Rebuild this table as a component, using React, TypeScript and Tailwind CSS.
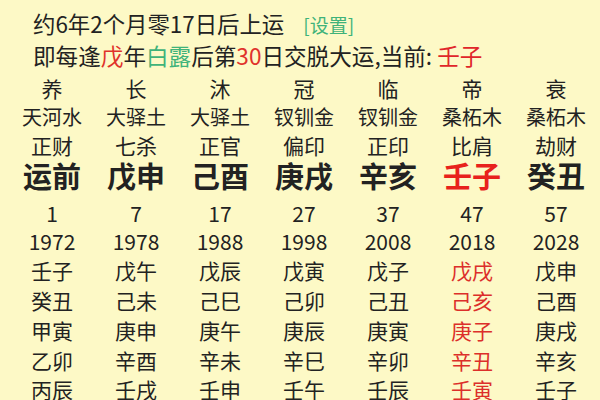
import React from "react";

type Col = {
  a: string; b: string; c: string; d: string; age: string; year: string;
  rows: string[]; hot?: boolean;
};

const cols: Col[] = [
  { a: "养", b: "天河水", c: "正财", d: "运前", age: "1", year: "1972", rows: ["壬子", "癸丑", "甲寅", "乙卯", "丙辰"] },
  { a: "长", b: "大驿土", c: "七杀", d: "戊申", age: "7", year: "1978", rows: ["戊午", "己未", "庚申", "辛酉", "壬戌"] },
  { a: "沐", b: "大驿土", c: "正官", d: "己酉", age: "17", year: "1988", rows: ["戊辰", "己巳", "庚午", "辛未", "壬申"] },
  { a: "冠", b: "钗钏金", c: "偏印", d: "庚戌", age: "27", year: "1998", rows: ["戊寅", "己卯", "庚辰", "辛巳", "壬午"] },
  { a: "临", b: "钗钏金", c: "正印", d: "辛亥", age: "37", year: "2008", rows: ["戊子", "己丑", "庚寅", "辛卯", "壬辰"] },
  { a: "帝", b: "桑柘木", c: "比肩", d: "壬子", age: "47", year: "2018", rows: ["戊戌", "己亥", "庚子", "辛丑", "壬寅"], hot: true },
  { a: "衰", b: "桑柘木", c: "劫财", d: "癸丑", age: "57", year: "2028", rows: ["戊申", "己酉", "庚戌", "辛亥", "壬子"] },
];

function Row({ cells, className }: { cells: React.ReactNode[]; className: string }) {
  return (
    <div className={"grid grid-cols-7 ml-[10px] w-[588px] text-center whitespace-nowrap " + className}>
      {cells.map((c, i) => (
        <div key={i}>{c}</div>
      ))}
    </div>
  );
}

export default function App() {
  return (
    <div
      className="w-[600px] h-[400px] overflow-hidden bg-[#fdf9c6] text-[#222222]"
      style={{ fontFamily: '"Noto Sans CJK SC", "Noto Sans", sans-serif' }}
    >
      <div className="pt-[8px]">
        <div className="pl-[33px] text-[22.4px] leading-[30px] whitespace-nowrap">
          约6年2个月零17日后上运
          <span className="ml-[19px] text-[19px] text-[#3fb37a]">[设置]</span>
        </div>
        <div className="pl-[33px] mt-[1px] text-[22.6px] leading-[30px] whitespace-nowrap">
          即每逢<span className="text-[#e0322b]">戊</span>年<span className="text-[#3fb37a]">白露</span>后第<span className="text-[#e0322b]">30</span>日交脱大运,当前: <span className="text-[#e0262a]">壬子</span>
        </div>
        <Row className="mt-[3px] text-[21px] leading-[28.5px]" cells={cols.map((c) => c.a)} />
        <Row className="text-[20px] leading-[28.5px]" cells={cols.map((c) => c.b)} />
        <Row className="text-[21px] leading-[28.5px]" cells={cols.map((c) => c.c)} />
        <Row
          className="text-[29px] leading-[31px] font-bold"
          cells={cols.map((c) => (
            <span className={c.hot ? "text-[#e8221c]" : ""}>{c.d}</span>
          ))}
        />
        <Row className="mt-[8px] text-[21px] leading-[28px]" cells={cols.map((c) => c.age)} />
        <Row className="text-[21px] leading-[29.8px]" cells={cols.map((c) => c.year)} />
        {[0, 1, 2, 3, 4].map((r) => (
          <Row
            key={r}
            className="text-[21px] leading-[29.8px]"
            cells={cols.map((c) => (
              <span className={c.hot ? "text-[#dc2f2a]" : ""}>{c.rows[r]}</span>
            ))}
          />
        ))}
      </div>
    </div>
  );
}
